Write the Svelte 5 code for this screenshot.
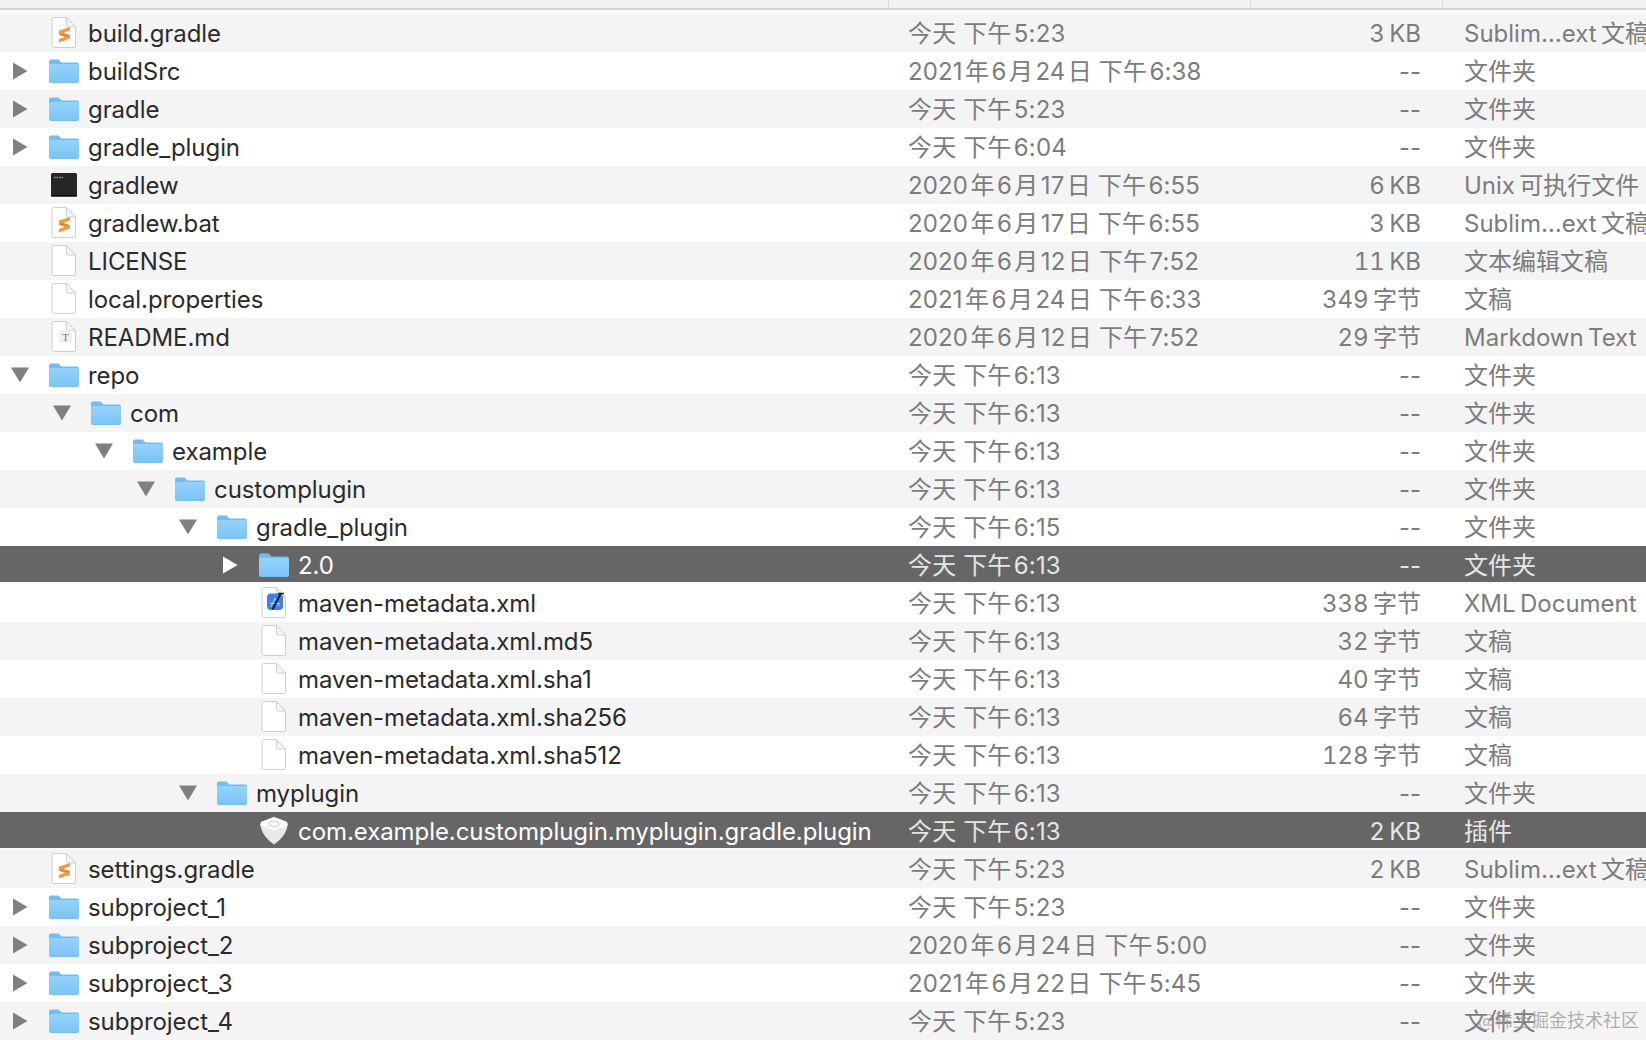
<script>
  const rows = [
    { name: 'build.gradle', icon: 'sublime', level: 0, date: '今天 下午5:23', size: '3 KB', kind: 'Sublim…ext 文稿' },
    { name: 'buildSrc', icon: 'folder', level: 0, arrow: 'right', date: '2021年6月24日 下午6:38', size: '--', kind: '文件夹' },
    { name: 'gradle', icon: 'folder', level: 0, arrow: 'right', date: '今天 下午5:23', size: '--', kind: '文件夹' },
    { name: 'gradle_plugin', icon: 'folder', level: 0, arrow: 'right', date: '今天 下午6:04', size: '--', kind: '文件夹' },
    { name: 'gradlew', icon: 'terminal', level: 0, date: '2020年6月17日 下午6:55', size: '6 KB', kind: 'Unix 可执行文件' },
    { name: 'gradlew.bat', icon: 'sublime', level: 0, date: '2020年6月17日 下午6:55', size: '3 KB', kind: 'Sublim…ext 文稿' },
    { name: 'LICENSE', icon: 'doc', level: 0, date: '2020年6月12日 下午7:52', size: '11 KB', kind: '文本编辑文稿' },
    { name: 'local.properties', icon: 'doc', level: 0, date: '2021年6月24日 下午6:33', size: '349 字节', kind: '文稿' },
    { name: 'README.md', icon: 'markdown', level: 0, date: '2020年6月12日 下午7:52', size: '29 字节', kind: 'Markdown Text' },
    { name: 'repo', icon: 'folder', level: 0, arrow: 'down', date: '今天 下午6:13', size: '--', kind: '文件夹' },
    { name: 'com', icon: 'folder', level: 1, arrow: 'down', date: '今天 下午6:13', size: '--', kind: '文件夹' },
    { name: 'example', icon: 'folder', level: 2, arrow: 'down', date: '今天 下午6:13', size: '--', kind: '文件夹' },
    { name: 'customplugin', icon: 'folder', level: 3, arrow: 'down', date: '今天 下午6:13', size: '--', kind: '文件夹' },
    { name: 'gradle_plugin', icon: 'folder', level: 4, arrow: 'down', date: '今天 下午6:15', size: '--', kind: '文件夹' },
    { name: '2.0', icon: 'folder', level: 5, arrow: 'right', date: '今天 下午6:13', size: '--', kind: '文件夹', selected: true },
    { name: 'maven-metadata.xml', icon: 'xml', level: 5, date: '今天 下午6:13', size: '338 字节', kind: 'XML Document' },
    { name: 'maven-metadata.xml.md5', icon: 'doc', level: 5, date: '今天 下午6:13', size: '32 字节', kind: '文稿' },
    { name: 'maven-metadata.xml.sha1', icon: 'doc', level: 5, date: '今天 下午6:13', size: '40 字节', kind: '文稿' },
    { name: 'maven-metadata.xml.sha256', icon: 'doc', level: 5, date: '今天 下午6:13', size: '64 字节', kind: '文稿' },
    { name: 'maven-metadata.xml.sha512', icon: 'doc', level: 5, date: '今天 下午6:13', size: '128 字节', kind: '文稿' },
    { name: 'myplugin', icon: 'folder', level: 4, arrow: 'down', date: '今天 下午6:13', size: '--', kind: '文件夹' },
    { name: 'com.example.customplugin.myplugin.gradle.plugin', icon: 'plugin', level: 5, date: '今天 下午6:13', size: '2 KB', kind: '插件', selected: true },
    { name: 'settings.gradle', icon: 'sublime', level: 0, date: '今天 下午5:23', size: '2 KB', kind: 'Sublim…ext 文稿' },
    { name: 'subproject_1', icon: 'folder', level: 0, arrow: 'right', date: '今天 下午5:23', size: '--', kind: '文件夹' },
    { name: 'subproject_2', icon: 'folder', level: 0, arrow: 'right', date: '2020年6月24日 下午5:00', size: '--', kind: '文件夹' },
    { name: 'subproject_3', icon: 'folder', level: 0, arrow: 'right', date: '2021年6月22日 下午5:45', size: '--', kind: '文件夹' },
    { name: 'subproject_4', icon: 'folder', level: 0, arrow: 'right', date: '今天 下午5:23', size: '--', kind: '文件夹' }
  ];

  // finder puts a small gap where digits meet CJK
  function gaps(s) {
    return s
      .replace(/(\d)([\u4e00-\u9fff])/g, '$1\u200a$2')
      .replace(/([\u4e00-\u9fff])(\d)/g, '$1\u200a$2');
  }

  const thin = (s) => s.replace(' ', '\u2009');
</script>

{#snippet page()}
  <path d="M2.500 0.500H15.500L24.500 10V29A1.500 1.500 0 0 1 23 30.500H2.500A1.500 1.500 0 0 1 1 29V2A1.500 1.500 0 0 1 2.500 0.500z" fill="#fff" stroke="#d0d0d0" />
  <path d="M15.500 0.500V8.500A1.500 1.500 0 0 0 17 10H24.500z" fill="#f5f5f5" stroke="#d0d0d0" />
{/snippet}

{#snippet fileIcon(icon)}
  {#if icon === 'folder'}
    <svg class="icon" width="32" height="26" viewBox="0 0 32 26">
      <defs>
        <linearGradient id="fold" x1="0" y1="0" x2="0" y2="1">
          <stop offset="0" stop-color="#94d3fb" />
          <stop offset="1" stop-color="#7cc3f6" />
        </linearGradient>
      </defs>
      <path d="M1 3.500A2 2 0 0 1 3 1.500h7.500l3 3H29a2 2 0 0 1 2 2V23a2 2 0 0 1-2 2H3a2 2 0 0 1-2-2z" fill="#74bbf0" />
      <path d="M1 7.500A1.500 1.500 0 0 1 2.500 6H29.500A1.500 1.500 0 0 1 31 7.500V23a1.500 1.500 0 0 1-1.500 1.500H2.500A1.500 1.500 0 0 1 1 23z" fill="url(#fold)" />
    </svg>
  {:else if icon === 'terminal'}
    <svg class="icon" width="32" height="26" viewBox="0 0 32 26">
      <rect x="3" y="1" width="26" height="23.500" rx="1.500" fill="#262626" />
      <rect x="3" y="23" width="26" height="1.500" fill="#0a0a0a" />
      <path d="M6 5.500h1.500M8.500 5.500H10M11 5.500h1.500M13.500 5.500H15" stroke="#6cc065" stroke-width="1.500" />
    </svg>
  {:else if icon === 'plugin'}
    <svg class="icon" width="32" height="30" viewBox="0 0 32 30">
      <path d="M16 1L29 6Q30 8 29 12Q26 22 16 28.500Q6 22 3 12Q2 8 3 6z" fill="#e9e9e9" />
      <path d="M16 1L29 6Q30 8 29.500 9.500L16 14.500L2.500 9.500Q2 8 3 6z" fill="#fbfbfb" />
      <ellipse cx="16" cy="8" rx="5" ry="2.500" fill="none" stroke="#dcdcdc" stroke-width="1.500" />
    </svg>
  {:else}
    <svg class="icon" width="26" height="32" viewBox="0 0 26 32">
      {@render page()}
      {#if icon === 'sublime'}
        <path d="M8 14.500L19 18V21.500L8 18z" fill="#e08a33" />
        <path d="M8 13.500L19 10V13.500L8 17.500z" fill="#f19b3f" />
        <path d="M8 22L19 18V21.500L8 25.500z" fill="#f19b3f" />
      {:else if icon === 'markdown'}
        <rect x="8" y="10" width="13" height="12" rx="3" fill="#f0f0f0" />
        <text x="14.500" y="20" class="t-glyph">T</text>
      {:else if icon === 'xml'}
        <rect x="6" y="6.500" width="16" height="16.500" rx="4" fill="#3f82e6" />
        <path d="M10 19.500l4-8M14 11.500l4 8M9 16.500h10" stroke="#b9d6fb" stroke-width="1" fill="none" />
        <path d="M11.500 22.500L19.500 7" stroke="#1b2430" stroke-width="2" />
        <path d="M17 6.500h6" stroke="#1b2430" stroke-width="1.500" />
      {/if}
    </svg>
  {/if}
{/snippet}

<div class="finder">
  <div class="head">
    <div class="hcol name-w"></div>
    <div class="hcol date-w"></div>
    <div class="hcol size-w"></div>
    <div></div>
  </div>
  <div class="list">
    {#each rows as r, i}
      <div class="row" class:alt={i % 2 === 0} class:selected={r.selected}>
        <div class="name name-w" style="padding-left: {r.level * 42}px">
          <span class="arrow">
            {#if r.arrow === 'right'}
              <svg width="16" height="18" viewBox="0 0 16 18"><path d="M1 0.500L15.500 9 1 17.500z" /></svg>
            {:else if r.arrow === 'down'}
              <svg width="18" height="16" viewBox="0 0 18 16"><path d="M0 0.500H18L9 15.500z" /></svg>
            {/if}
          </span>
          <span class="icon-box">{@render fileIcon(r.icon)}</span>
          <span class="label">{r.name}</span>
        </div>
        <div class="date date-w">{gaps(r.date)}</div>
        <div class="size size-w" class:num={r.size !== '--'}>{thin(r.size)}</div>
        <div class="kind">{thin(r.kind)}</div>
      </div>
    {/each}
  </div>
  <div class="mark">@稀土掘金技术社区</div>
</div>

<style>
  :global(body) {
    margin: 0;
    background: #fff;
  }

  .finder {
    position: relative;
    width: 1646px;
    height: 1040px;
    overflow: hidden;
    font-family: Inter, "Noto Sans CJK SC", sans-serif;
    font-size: 24px;
    line-height: 30px;
    color: #7c7c7c;
  }

  .head {
    display: flex;
    height: 10px;
    box-sizing: border-box;
    background: #f1f1f1;
    border-bottom: 2px solid #d6d6d6;
  }

  .hcol {
    box-sizing: border-box;
    border-right: 1px solid #d9d9d9;
  }

  .list {
    padding-top: 4px;
    background: #fafafa;
  }

  .name-w { width: 889px; flex: none; }
  .date-w { width: 362px; flex: none; }
  .size-w { width: 192px; flex: none; }

  .row {
    display: flex;
    align-items: center;
    box-sizing: border-box;
    height: 38px;
    background: #fff;
    white-space: nowrap;
  }

  .row.alt {
    background: #f4f4f4;
  }

  .row.selected {
    height: 36px;
    padding-top: 2px;
    margin-bottom: 2px;
    background: #666;
    color: #e6e6e6;
  }

  .name {
    display: flex;
    align-items: center;
    box-sizing: border-box;
    color: #2b2b2b;
  }

  .label {
    letter-spacing: -0.07px;
    padding-top: 2px;
  }

  .selected .name {
    color: #fff;
  }

  .arrow {
    display: flex;
    justify-content: center;
    width: 40px;
    flex: none;
  }

  .arrow path {
    fill: #808080;
  }

  .selected .arrow path {
    fill: #fff;
  }

  .icon-box {
    display: flex;
    justify-content: center;
    width: 48px;
    flex: none;
  }

  .icon {
    display: block;
  }

  .t-glyph {
    font-family: "Liberation Serif", serif;
    font-size: 11px;
    fill: #777;
    text-anchor: middle;
  }

  .date {
    box-sizing: border-box;
    padding: 2px 0 0 19px;
    letter-spacing: 0.15px;
  }

  .size {
    box-sizing: border-box;
    padding: 2px 22px 0 0;
    text-align: right;
  }

  .size.num {
    font-variant-numeric: tabular-nums;
  }

  .kind {
    padding: 2px 0 0 21px;
  }

  .mark {
    position: absolute;
    right: 7px;
    bottom: 6px;
    font-family: "Noto Sans CJK SC", sans-serif;
    font-size: 18px;
    color: rgba(150, 150, 150, 0.75);
  }
</style>
